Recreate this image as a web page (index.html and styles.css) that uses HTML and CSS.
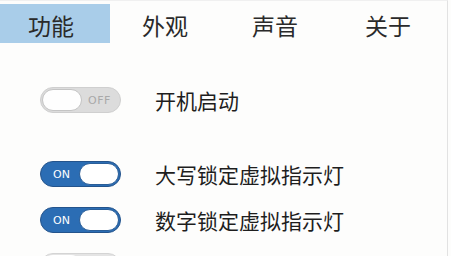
FILE: index.html
```html
<!DOCTYPE html>
<html>
<head>
<meta charset="utf-8">
<link rel="stylesheet" href="styles.css">
</head>
<body>
<div class="window">
  <div class="tabs">
    <div class="tab tab-1 active">功能</div>
    <div class="tab tab-2">外观</div>
    <div class="tab tab-3">声音</div>
    <div class="tab tab-4">关于</div>
  </div>
  <div class="list">
    <div class="row row-first">
      <div class="toggle off"><span class="knob"></span><span class="label">OFF</span></div>
      <div class="text">开机启动</div>
    </div>
    <div class="row row-gap">
      <div class="toggle on"><span class="label">ON</span><span class="knob"></span></div>
      <div class="text">大写锁定虚拟指示灯</div>
    </div>
    <div class="row">
      <div class="toggle on"><span class="label">ON</span><span class="knob"></span></div>
      <div class="text">数字锁定虚拟指示灯</div>
    </div>
    <div class="row">
      <div class="toggle faint"><span class="knob"></span><span class="label">OFF</span></div>
      <div class="text faint-text">滚动锁定虚拟指示灯</div>
    </div>
  </div>
</div>
</body>
</html>
```
FILE: styles.css
```css
html, body {
  margin: 0;
  padding: 0;
  background: #fdfdfc;
}
body {
  font-family: "Noto Sans CJK SC", "Noto Sans", sans-serif;
  color: #1e1e1e;
  width: 451px;
  height: 256px;
  overflow: hidden;
}
.window {
  width: 448px;
  height: 256px;
  border-right: 1px solid #e2e2e2;
  border-top: 1px solid #f0f0f0;
  box-sizing: border-box;
  overflow: hidden;
}
.tabs {
  display: flex;
  padding-top: 3px;
  height: 40px;
}
.tab {
  height: 39px;
  line-height: 42px;
  font-size: 23px;
  color: #2a2a2a;
  text-align: center;
  box-sizing: border-box;
}
.tab-1 { width: 110px; padding-right: 8px; }
.tab-2 { width: 110px; }
.tab-3 { width: 110px; }
.tab-4 { width: 116px; }
.tab.active {
  background: #a9cde9;
}
.list {
  padding: 43px 0 0 40px;
}
.row {
  display: flex;
  align-items: center;
  height: 26px;
  margin-top: 20px;
}
.row-first { margin-top: 0; }
.row-gap { margin-top: 48px; }
.toggle {
  width: 81px;
  height: 26px;
  border-radius: 13px;
  box-sizing: border-box;
  display: flex;
  align-items: center;
  flex-shrink: 0;
  font-family: "DejaVu Sans", sans-serif;
  font-size: 11px;
}
.toggle .knob {
  width: 40px;
  height: 22px;
  border-radius: 11px;
  background: #ffffff;
  box-sizing: border-box;
}
.toggle.off {
  background: #dcdcdc;
  border: 1px solid #cfcfcf;
  padding-left: 1px;
}
.toggle.off .knob {
  border: 1px solid #c4c4c4;
  background: #fefefe;
}
.toggle.off .label {
  color: #a9a9a9;
  margin-left: 6px;
  letter-spacing: 0.5px;
}
.toggle.on {
  background: #2b6db4;
  border: 1px solid #24548c;
  justify-content: space-between;
  padding: 0 1px 0 12px;
}
.toggle.on .label {
  color: #ffffff;
}
.toggle.on .knob {
  border: 1px solid #2a5e98;
}
.toggle.faint {
  background: #e4e4e4;
  border: 1px solid #d4d4d4;
  padding-left: 1px;
}
.toggle.faint .label { color: #bbb; margin-left: 6px; }
.text {
  margin-left: 34px;
  font-size: 21px;
  line-height: 26px;
  white-space: nowrap;
}
.faint-text {
  color: #f1ede2;
}
```
